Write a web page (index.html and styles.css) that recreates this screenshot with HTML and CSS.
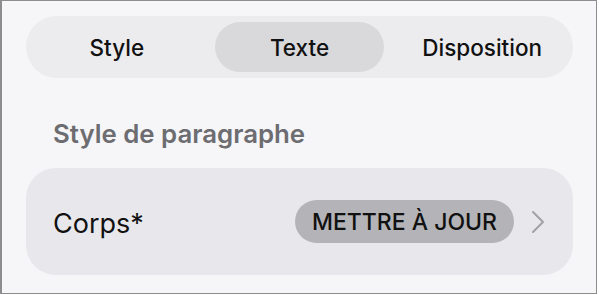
FILE: index.html
```html
<!DOCTYPE html>
<html lang="fr">
<head>
<meta charset="UTF-8" />
<meta name="viewport" content="width=device-width, initial-scale=1"/>
<title>Format</title>
<link rel="stylesheet" href="styles.css">
</head>
<body>
<div id="panel">
  <div class="segmented" role="tablist">
    <button class="seg" role="tab">Style</button>
    <button class="seg active" role="tab" aria-selected="true">Texte</button>
    <button class="seg" role="tab">Disposition</button>
  </div>

  <div class="section-title">Style de paragraphe</div>

  <div class="card">
    <span class="card-label">Corps*</span>
    <button class="update-btn">METTRE À JOUR</button>
    <svg class="chevron" width="14" height="24" viewBox="0 0 14 24" aria-hidden="true">
      <path d="M2 2 L12 12 L2 22" fill="none" stroke="#a2a2a6" stroke-width="2" stroke-linecap="round" stroke-linejoin="round"/>
    </svg>
  </div>
</div>
</body>
</html>
```

FILE: styles.css
```css
/* Reset & base */
* {
  box-sizing: border-box;
}
body, html {
  margin: 0; padding: 0;
  background: #fff;
  font-family: 'Inter', 'Liberation Sans', sans-serif;
  color: #111;
}
#panel {
  width: 597px;
  height: 294px;
  background: #f6f6f9;
  border: 1px solid #8d8d8d;
  border-left-width: 2px;
  padding: 15px 24px 0 24px;
}

/* Segmented control */
.segmented {
  display: flex;
  gap: 13px;
  width: 547px;
  height: 62px;
  padding: 6px;
  background: #ececef;
  border-radius: 31px;
}
.seg {
  flex: 1;
  border: none;
  background: transparent;
  border-radius: 25px;
  font-family: inherit;
  font-size: 22.5px;
  font-weight: 500;
  color: #111;
  padding: 0;
  cursor: pointer;
}
.seg.active {
  background: #d9d9dc;
}

.section-title {
  margin: 41px 0 0 27px;
  font-size: 25.8px;
  font-weight: 600;
  color: #6d6d71;
  line-height: 30px;
}

/* Paragraph style row */
.card {
  display: flex;
  align-items: center;
  width: 547px;
  height: 107px;
  margin-top: 19px;
  padding: 0 28px 0 27px;
  background: #e8e8ec;
  border-radius: 30px;
}
.card-label {
  flex: 1;
  padding-top: 4px;
  font-size: 27px;
  color: #111;
}
.update-btn {
  height: 43px;
  padding: 0 17px;
  border: none;
  border-radius: 22px;
  background: #b4b4b8;
  font-family: inherit;
  font-size: 23px;
  font-weight: 500;
  color: #111;
  cursor: pointer;
}
.chevron {
  margin-left: 17px;
}
```
